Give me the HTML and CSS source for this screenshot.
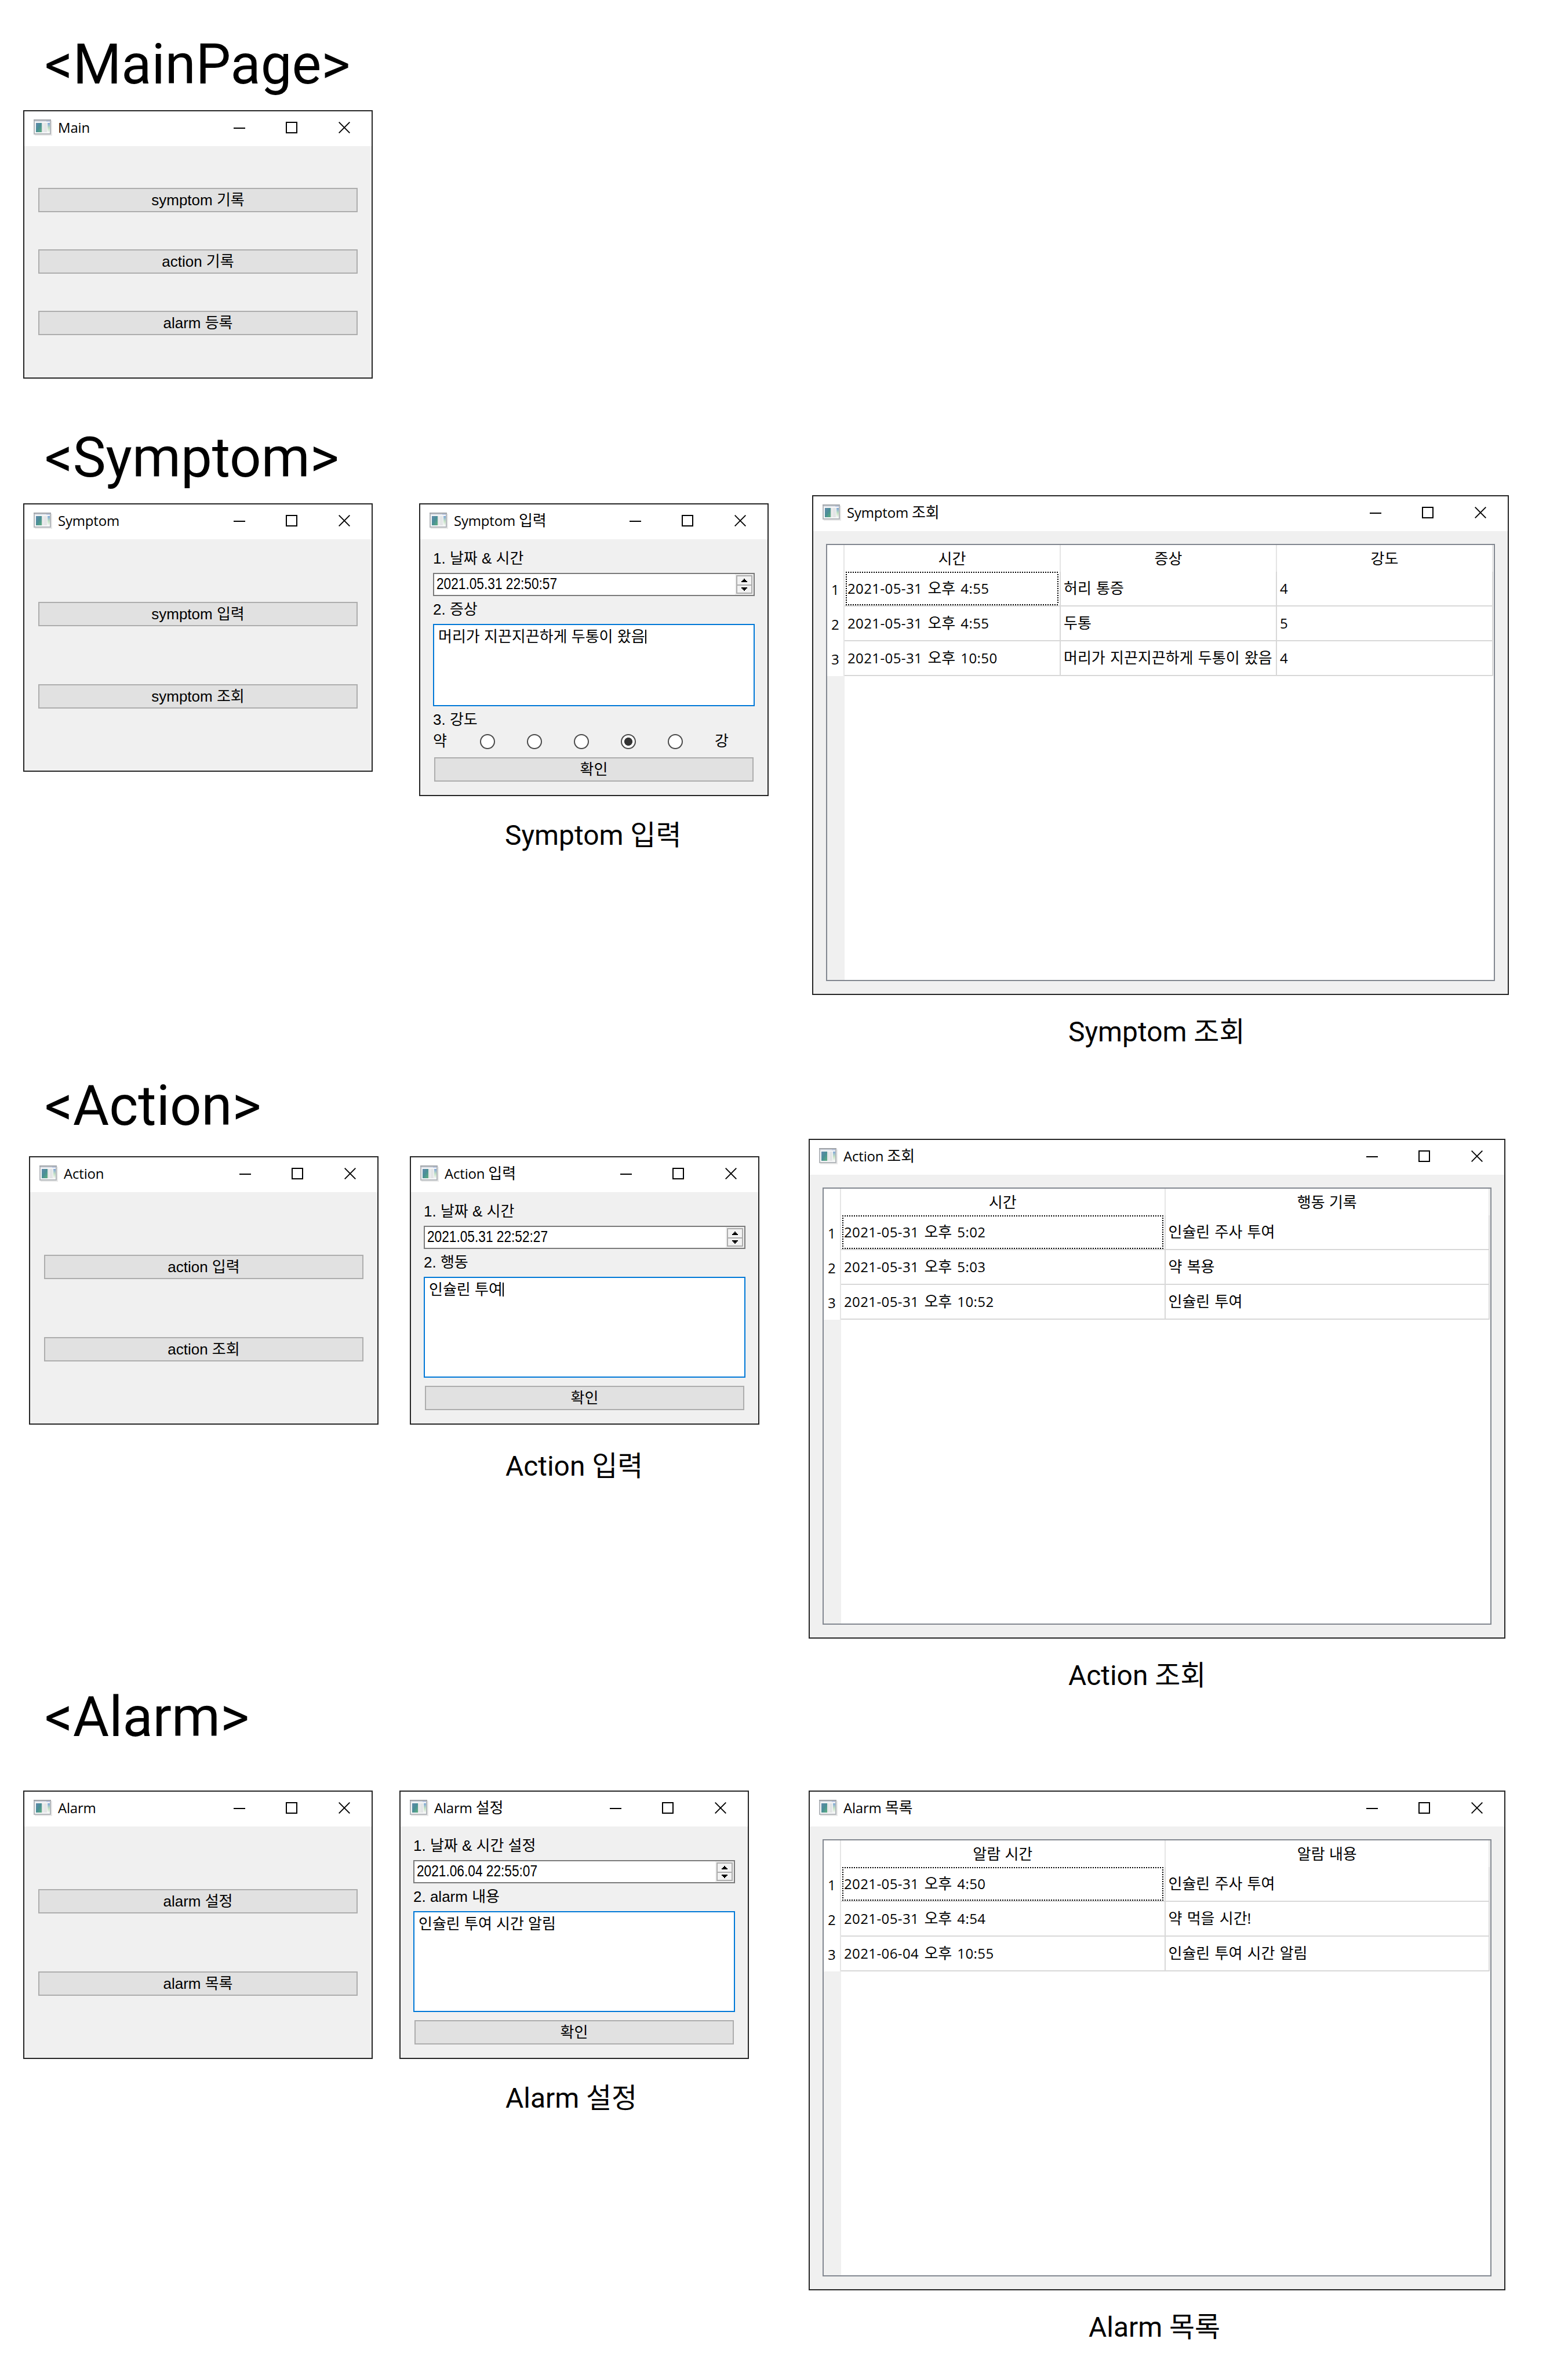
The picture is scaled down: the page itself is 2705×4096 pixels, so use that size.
FILE: index.html
```html
<!DOCTYPE html>
<html lang="ko">
<head>
<meta charset="utf-8">
<title>Symptom / Action / Alarm</title>
<link rel="stylesheet" href="styles.css">
</head>
<body>
<svg class="defs" width="0" height="0" aria-hidden="true">
  <defs>
    <linearGradient id="pane" x1="0" y1="0" x2="1" y2="1"><stop offset="0" stop-color="#6189ad"/><stop offset=".5" stop-color="#4a8f96"/><stop offset="1" stop-color="#5fb07e"/></linearGradient>
    <linearGradient id="side" x1="0" y1="0" x2="0" y2="1"><stop offset="0" stop-color="#7fa6d8"/><stop offset=".55" stop-color="#c4e2c4"/><stop offset="1" stop-color="#f4f6f4"/></linearGradient>
    <symbol id="app" viewBox="0 0 32 28">
      <path d="M2 2h30v26H2z" fill="#e9e9e9"/>
      <path d="M0 0h30v26H0z" fill="#b4b8bc"/>
      <path d="M0 0h30v2H0z" fill="#9fa3a8"/>
      <path d="M2 2h26v22H2z" fill="#f6f7f8"/>
      <path d="M2 2h20v2H2z" fill="#d5dae2"/><path d="M22 2h6v2h-6z" fill="#b9c6e0"/>
      <path d="M4 6h10v16H4z" fill="url(#pane)"/>
      <path d="M14 6h9v16h-9z" fill="#e3e5e6"/><path d="M17 6h1v16h-1z" fill="#f2f2f2"/>
      <path d="M24 6h4v16h-4z" fill="url(#side)"/>
    </symbol>
    <symbol id="min" viewBox="0 0 20 20"><path d="M0 10h20v2H0z"/></symbol>
    <symbol id="max" viewBox="0 0 20 20"><path d="M1 1h18v18H1z" fill="none" stroke="#000" stroke-width="2"/></symbol>
    <symbol id="close" viewBox="0 0 20 20"><path d="M.7.7l18.6 18.6M19.3.7L.7 19.3" fill="none" stroke="#000" stroke-width="1.9"/></symbol>
    <symbol id="up" viewBox="0 0 10 6"><path d="M4 0h2v2h2v2h2v2H0V4h2V2h2z"/></symbol>
    <symbol id="down" viewBox="0 0 10 6"><path d="M0 0h10v2H8v2H6v2H4V4H2V2H0z"/></symbol>
  </defs>
</svg>
<main class="board">
  <h1 class="heading h-main">&lt;MainPage&gt;</h1>
  <h1 class="heading h-symptom">&lt;Symptom&gt;</h1>
  <h1 class="heading h-action">&lt;Action&gt;</h1>
  <h1 class="heading h-alarm">&lt;Alarm&gt;</h1>

  <section class="window w-main">
    <header class="titlebar"><svg class="app"><use href="#app"/></svg><span class="title">Main</span><span class="controls"><svg><use href="#min"/></svg><svg><use href="#max"/></svg><svg><use href="#close"/></svg></span></header>
    <div class="menu three"><button class="btn">symptom 기록</button><button class="btn">action 기록</button><button class="btn">alarm 등록</button></div>
  </section>

  <section class="window w-symptom">
    <header class="titlebar"><svg class="app"><use href="#app"/></svg><span class="title">Symptom</span><span class="controls"><svg><use href="#min"/></svg><svg><use href="#max"/></svg><svg><use href="#close"/></svg></span></header>
    <div class="menu"><button class="btn">symptom 입력</button><button class="btn">symptom 조회</button></div>
  </section>

  <section class="window tall w-symptom-input">
    <header class="titlebar"><svg class="app"><use href="#app"/></svg><span class="title">Symptom <span class="ko">입력</span></span><span class="controls"><svg><use href="#min"/></svg><svg><use href="#max"/></svg><svg><use href="#close"/></svg></span></header>
    <div class="form">
      <div class="label">1. 날짜 &amp; 시간</div>
      <div class="date"><span class="digits">2021.05.31 22:50:57</span><span class="spin"><span class="step"><svg><use href="#up"/></svg></span><span class="step"><svg><use href="#down"/></svg></span></span></div>
      <div class="label">2. 증상</div>
      <div class="area">머리가 지끈지끈하게 두통이 왔음<span class="caret"></span></div>
      <div class="label">3. 강도</div>
      <div class="scale"><span>약</span><span class="radio"></span><span class="radio"></span><span class="radio"></span><span class="radio on"></span><span class="radio"></span><span>강</span></div>
      <button class="btn ok">확인</button>
    </div>
  </section>
  <p class="caption c-symptom-input">Symptom 입력</p>

  <section class="window wide w-symptom-list">
    <header class="titlebar"><svg class="app"><use href="#app"/></svg><span class="title">Symptom <span class="ko">조회</span></span><span class="controls"><svg><use href="#min"/></svg><svg><use href="#max"/></svg><svg><use href="#close"/></svg></span></header>
    <div class="frame">
      <div class="grid cols3">
        <div class="num top"></div><div class="th">시간</div><div class="th">증상</div><div class="th">강도</div>
        <div class="num">1</div><div class="td focus">2021-05-31 <span class="ko">오후</span> 4:55</div><div class="td"><span class="ko">허리 통증</span></div><div class="td">4</div>
        <div class="num">2</div><div class="td">2021-05-31 <span class="ko">오후</span> 4:55</div><div class="td"><span class="ko">두통</span></div><div class="td">5</div>
        <div class="num">3</div><div class="td">2021-05-31 <span class="ko">오후</span> 10:50</div><div class="td"><span class="ko">머리가 지끈지끈하게 두통이 왔음</span></div><div class="td">4</div>
      </div>
      <div class="gutter"></div>
    </div>
  </section>
  <p class="caption c-symptom-list">Symptom 조회</p>

  <section class="window w-action">
    <header class="titlebar"><svg class="app"><use href="#app"/></svg><span class="title">Action</span><span class="controls"><svg><use href="#min"/></svg><svg><use href="#max"/></svg><svg><use href="#close"/></svg></span></header>
    <div class="menu"><button class="btn">action 입력</button><button class="btn">action 조회</button></div>
  </section>

  <section class="window w-action-input">
    <header class="titlebar"><svg class="app"><use href="#app"/></svg><span class="title">Action <span class="ko">입력</span></span><span class="controls"><svg><use href="#min"/></svg><svg><use href="#max"/></svg><svg><use href="#close"/></svg></span></header>
    <div class="form">
      <div class="label">1. 날짜 &amp; 시간</div>
      <div class="date"><span class="digits">2021.05.31 22:52:27</span><span class="spin"><span class="step"><svg><use href="#up"/></svg></span><span class="step"><svg><use href="#down"/></svg></span></span></div>
      <div class="label">2. 행동</div>
      <div class="area large">인슐린 투여<span class="caret"></span></div>
      <button class="btn ok">확인</button>
    </div>
  </section>
  <p class="caption c-action-input">Action 입력</p>

  <section class="window wide w-action-list">
    <header class="titlebar"><svg class="app"><use href="#app"/></svg><span class="title">Action <span class="ko">조회</span></span><span class="controls"><svg><use href="#min"/></svg><svg><use href="#max"/></svg><svg><use href="#close"/></svg></span></header>
    <div class="frame">
      <div class="grid cols2">
        <div class="num top"></div><div class="th">시간</div><div class="th">행동 기록</div>
        <div class="num">1</div><div class="td focus">2021-05-31 <span class="ko">오후</span> 5:02</div><div class="td"><span class="ko">인슐린 주사 투여</span></div>
        <div class="num">2</div><div class="td">2021-05-31 <span class="ko">오후</span> 5:03</div><div class="td"><span class="ko">약 복용</span></div>
        <div class="num">3</div><div class="td">2021-05-31 <span class="ko">오후</span> 10:52</div><div class="td"><span class="ko">인슐린 투여</span></div>
      </div>
      <div class="gutter"></div>
    </div>
  </section>
  <p class="caption c-action-list">Action 조회</p>

  <section class="window w-alarm">
    <header class="titlebar"><svg class="app"><use href="#app"/></svg><span class="title">Alarm</span><span class="controls"><svg><use href="#min"/></svg><svg><use href="#max"/></svg><svg><use href="#close"/></svg></span></header>
    <div class="menu"><button class="btn">alarm 설정</button><button class="btn">alarm 목록</button></div>
  </section>

  <section class="window w-alarm-input">
    <header class="titlebar"><svg class="app"><use href="#app"/></svg><span class="title">Alarm <span class="ko">설정</span></span><span class="controls"><svg><use href="#min"/></svg><svg><use href="#max"/></svg><svg><use href="#close"/></svg></span></header>
    <div class="form">
      <div class="label">1. 날짜 &amp; 시간 설정</div>
      <div class="date"><span class="digits">2021.06.04 22:55:07</span><span class="spin"><span class="step"><svg><use href="#up"/></svg></span><span class="step"><svg><use href="#down"/></svg></span></span></div>
      <div class="label">2. alarm 내용</div>
      <div class="area large">인슐린 투여 시간 알림</div>
      <button class="btn ok">확인</button>
    </div>
  </section>
  <p class="caption c-alarm-input">Alarm 설정</p>

  <section class="window wide w-alarm-list">
    <header class="titlebar"><svg class="app"><use href="#app"/></svg><span class="title">Alarm <span class="ko">목록</span></span><span class="controls"><svg><use href="#min"/></svg><svg><use href="#max"/></svg><svg><use href="#close"/></svg></span></header>
    <div class="frame">
      <div class="grid cols2">
        <div class="num top"></div><div class="th">알람 시간</div><div class="th">알람 내용</div>
        <div class="num">1</div><div class="td focus">2021-05-31 <span class="ko">오후</span> 4:50</div><div class="td"><span class="ko">인슐린 주사 투여</span></div>
        <div class="num">2</div><div class="td">2021-05-31 <span class="ko">오후</span> 4:54</div><div class="td"><span class="ko">약 먹을 시간!</span></div>
        <div class="num">3</div><div class="td">2021-06-04 <span class="ko">오후</span> 10:55</div><div class="td"><span class="ko">인슐린 투여 시간 알림</span></div>
      </div>
      <div class="gutter"></div>
    </div>
  </section>
  <p class="caption c-alarm-list">Alarm 목록</p>
</main>
</body>
</html>
```
FILE: styles.css
```css
* { box-sizing: border-box; }
body { margin: 0; background: #fff; color: #000; }
.defs { position: absolute; }
.board { position: relative; width: 2705px; height: 4096px; overflow: hidden; background: #fff; }

/* free canvas: headings, windows and captions */
.heading, .caption { position: absolute; margin: 0; font-family: Roboto, "Noto Sans CJK KR", sans-serif; font-weight: 400; white-space: nowrap; }
.heading { left: 77px; font-size: 95.8px; line-height: 112px; }
.h-main { top: 55px; }
.h-symptom { top: 733px; }
.h-action { top: 1851px; }
.h-alarm { top: 2905px; }
.caption { font-size: 47.9px; line-height: 56px; }
.c-symptom-input { left: 871px; top: 1413px; }
.c-symptom-list { left: 1843px; top: 1752px; }
.c-action-input { left: 872px; top: 2501px; }
.c-action-list { left: 1843px; top: 2862px; }
.c-alarm-input { left: 872px; top: 3591px; }
.c-alarm-list { left: 1878px; top: 3986px; }

.window { position: absolute; display: flex; flex-direction: column; width: 603px; height: 463px; border: 2px solid #262626; background: #f0f0f0; }
.window.tall { height: 505px; }
.window.wide { width: 1202px; height: 862px; }
.w-main { left: 40px; top: 190px; }
.w-symptom { left: 40px; top: 868px; }
.w-symptom-input { left: 723px; top: 868px; }
.w-symptom-list { left: 1401px; top: 854px; }
.w-action { left: 50px; top: 1994px; }
.w-action-input { left: 707px; top: 1994px; }
.w-action-list { left: 1395px; top: 1964px; }
.w-alarm { left: 40px; top: 3088px; }
.w-alarm-input { left: 689px; top: 3088px; }
.w-alarm-list { left: 1395px; top: 3088px; }

.titlebar { flex: none; display: flex; align-items: flex-start; height: 60px; padding: 14px 37px 0 16px; background: #fff; }
.app { flex: none; width: 32px; height: 28px; margin-right: 10px; }
.title { margin-top: -2px; font: 24px/32px "Open Sans", "Noto Sans CJK KR", sans-serif; white-space: nowrap; letter-spacing: -.2px; }
.ko { font-family: "Open Sans", "Noto Sans CJK KR", sans-serif; font-size: 26px; line-height: 1px; letter-spacing: 0; }
.controls { display: flex; gap: 70px; margin: 4px 0 0 auto; }
.controls svg { width: 20px; height: 20px; }
.controls svg:last-child { margin-left: 1px; }

.btn { display: block; height: 42px; padding: 0; border: 2px solid #adadad; border-radius: 0; background: #e1e1e1; color: #000; text-align: center; }
.btn, .label, .area, .scale, .date { font: 26px/36px "Liberation Sans", "Noto Sans CJK KR", sans-serif; white-space: nowrap; }
.menu { display: flex; flex-direction: column; gap: 100px; padding: 108px 24px 0; }
.menu.three { gap: 64px; padding-top: 72px; }

.form { display: flex; flex-direction: column; padding: 10px 22px 0; }
.label { height: 48px; line-height: 46px; padding-left: 0; }
.date { display: flex; justify-content: space-between; height: 40px; border: 2px solid #7a7a7a; background: #fff; }
.digits { padding-left: 4px; font-size: 28px; line-height: 34px; transform: scaleX(.81); transform-origin: 4px 0; }
.spin { display: flex; flex-direction: column; width: 32px; padding: 2px; background: #f0f0f0; }
.step { display: flex; align-items: center; justify-content: center; height: 18px; border: 2px solid #adadad; background: #f2f2f2; }
.step + .step { height: 16px; margin-top: -2px; }
.step svg { width: 10px; height: 6px; }
.area { display: flex; height: 142px; padding: 2px 0 0 7px; border: 2px solid #0078d7; background: #fff; }
.area.large { height: 174px; }
.caret { width: 2px; height: 24px; margin-top: 6px; background: #000; }
.scale { display: grid; grid-template-columns: repeat(7, 1fr); column-gap: 12px; height: 26px; line-height: 24px; }
.radio { width: 26px; height: 26px; border: 2px solid #4a4a4a; border-radius: 50%; background: #fff; }
.radio.on { background: radial-gradient(circle, #333 0 6.6px, #fff 7.4px); }
.btn.ok { margin: 14px 2px 0; }

.frame { display: flex; flex-direction: column; width: 1154px; height: 754px; margin: 22px 0 0 22px; border: 2px solid #828790; background: #fff; }
.grid { display: grid; grid-template-rows: 46px repeat(3, 60px); padding-right: 1px; }
.cols3 { grid-template-columns: 30px repeat(3, 1fr); }
.cols2 { grid-template-columns: 30px repeat(2, 1fr); }
.num, .td { font: 24px/57px "Open Sans", "Noto Sans CJK KR", sans-serif; white-space: nowrap; }
.num { padding-left: 7px; border-right: 2px solid #e5e5e5; line-height: 61px; }
.th { border-right: 2px solid #e5e5e5; text-align: center; font: 26px/43px "Noto Sans CJK KR", sans-serif; }
.td { padding-left: 5px; border-right: 2px solid #d8d8d8; border-bottom: 2px solid #d8d8d8; letter-spacing: .4px; word-spacing: 2.5px; }
.td .ko { word-spacing: 1.5px; }
.focus {
  background:
    repeating-linear-gradient(90deg, #000 0 2px, #fff 2px 4px) 2px 0 / calc(100% - 4px) 2px no-repeat,
    repeating-linear-gradient(90deg, #000 0 2px, #fff 2px 4px) 2px 100% / calc(100% - 4px) 2px no-repeat,
    repeating-linear-gradient(#000 0 2px, #fff 2px 4px) 2px 0 / 2px 100% no-repeat,
    repeating-linear-gradient(#000 0 2px, #fff 2px 4px) calc(100% - 2px) 0 / 2px 100% no-repeat;
}
.gutter { flex: 1; width: 30px; background: #f0f0f0; }
```
